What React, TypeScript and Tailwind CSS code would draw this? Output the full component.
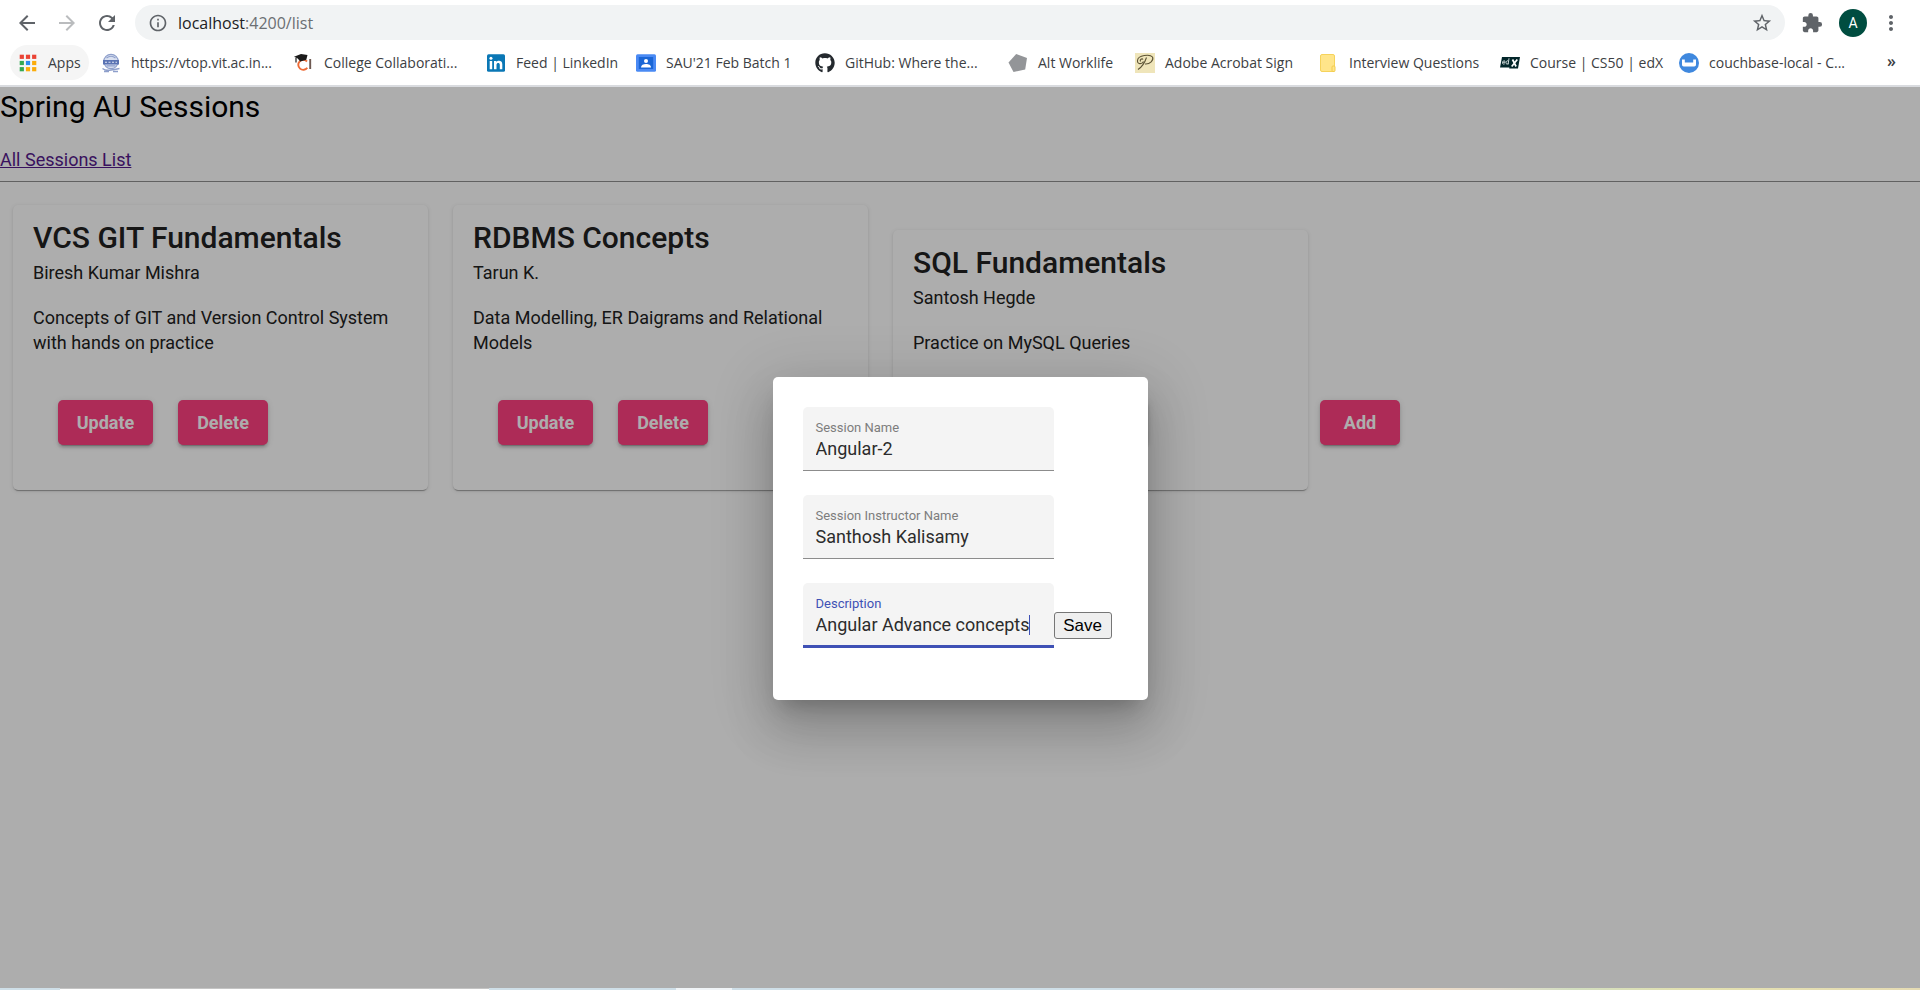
import React from "react";
import {
  MdArrowBack,
  MdArrowForward,
  MdExtension,
  MdMoreVert,
  MdOutlineInfo,
  MdRefresh,
  MdStarBorder,
} from "react-icons/md";
import { FaGithub } from "react-icons/fa";

const AppsIcon = () => (
  <svg viewBox="0 0 20 20" className="size-5">
    {["#ea4335", "#ea4335", "#ea4335", "#34a853", "#2b8cf0", "#fbac0a", "#34a853", "#fbac0a", "#fbac0a"].map((c, i) => (
      <rect key={i} x={1.7 + (i % 3) * 6.2} y={1.7 + Math.floor(i / 3) * 6.2} width="4.2" height="4.2" fill={c} />
    ))}
  </svg>
);

const VitIcon = () => (
  <svg viewBox="0 0 20 20" className="size-5" fill="none" stroke="#8e9fcb">
    <circle cx="10" cy="8.500" r="7.2" strokeWidth="1.2" fill="#d9e0f0" />
    <path d="M5.500 5q4.500-3.500 9 0M5.500 12.800h9" strokeWidth="1.2" />
    <path d="M2 7h16v4.500H2z" fill="#5a73b3" stroke="none" />
    <path d="M4 9.300h2m1.500 0h2m1.500 0h2m1.500 0h1.500" stroke="#dfe6f5" strokeWidth="1.1" />
    <path d="M1.500 15.500q3 2.500 8.500 1.500t8.500-1.500M3 18.500h5m4 0h5" strokeWidth="1.400" />
  </svg>
);

const CollegeIcon = () => (
  <svg viewBox="0 0 20 20" className="size-5">
    <path d="M13 8.500a5 5 0 1 0 .3 6.300" fill="none" stroke="#ee6a35" strokeWidth="1.900" />
    <path d="M0 3.800 7 1l6.500 1-1.200 4.800-6 1.700-2.600-3z" fill="#1b1b1b" />
    <path d="M2 5v4.500" stroke="#1b1b1b" strokeWidth="1.200" />
    <path d="M16.200 6v10" stroke="#6e5a52" strokeWidth="1.900" />
  </svg>
);

const LinkedInIcon = () => (
  <svg viewBox="0 0 20 20" className="size-5">
    <rect x="1" y="1.200" width="18" height="17.600" rx="1.500" fill="#0a77b5" />
    <path d="M3.700 8h2.500v8.200H3.700zM8 8h2.400v1.200c.9-1.900 5.900-2.300 5.900 2v5h-2.500v-4.500c0-2.400-3.300-2.200-3.300 0v4.500H8z" fill="#fff" />
    <circle cx="4.950" cy="5.200" r="1.500" fill="#fff" />
  </svg>
);

const ClassroomIcon = () => (
  <svg viewBox="0 0 20 20" className="size-5">
    <rect y="1.300" width="20" height="17.400" rx="1.500" fill="#4a8af4" />
    <rect x="2.800" y="4" width="14.400" height="12" fill="#1a66d6" />
    <circle cx="10" cy="7.900" r="2" fill="#fff" />
    <path d="M5 14.500c0-2.500 2.300-3.500 5-3.500s5 1 5 3.500z" fill="#fff" />
  </svg>
);

const PentagonIcon = () => (
  <svg viewBox="0 0 20 20" className="size-5">
    <path d="M8.200 1 19 5l-1.800 11.500L5.500 19 .5 9.500z" fill="#939598" />
  </svg>
);

const AdobeSignIcon = () => (
  <svg viewBox="0 0 20 20" className="size-5">
    <rect width="20" height="20" fill="#efe5ba" />
    <path d="M3 16.500C7 14 10 9 11.500 4.500M8.500 8.500c-1.500 3-6.500 3-6-1C3 2 15 1 17.500 4c1.500 3-2.500 7.500-7.500 7M8 6.500C7 5 4.500 6.500 5.500 8.500" fill="none" stroke="#5d5436" strokeWidth="1.100" />
  </svg>
);

const NoteIcon = () => (
  <svg viewBox="0 0 20 20" className="size-5">
    <rect x="1.500" y="1.500" width="14" height="17" rx="1.500" fill="#ffe58a" stroke="#f6d35b" />
    <rect x="13" y="13" width="3" height="5.500" rx="1" fill="#ffe58a" stroke="#f3cc4c" />
  </svg>
);

const EdxIcon = () => (
  <svg viewBox="0 0 20 20" className="size-5">
    <path d="M2 4h9.500l-1 10.500H0z" fill="#03262a" />
    <path d="M11 4h9l-2 11.500H9.200z" fill="#03262a" />
    <path d="M2.500 9.300h2.600c.2-2.300-2.400-1.800-2.600.2-.2 2 1.700 1.800 2.300 1.200M9 5.300l-.9 6.200M8.500 8.500c-.7-1.500-2.500-.5-2.500 1.200s1.700 2 2.200.6" fill="none" stroke="#dfe6e6" strokeWidth=".9" />
    <path d="m12.500 6.500 3.600 7M17.300 6.500l-5.600 7" stroke="#fff" strokeWidth="1.700" />
  </svg>
);

const CouchbaseIcon = () => (
  <svg viewBox="0 0 20 20" className="size-5">
    <circle cx="10" cy="10" r="10" fill="#3f88de" />
    <path d="M3 6.500h2.800v3h8.400v-3H17v5c0 1.300-.6 2-1.800 2H4.800c-1.200 0-1.800-.7-1.800-2z" fill="#fff" />
  </svg>
);

const bookmarks = [
  { label: "https://vtop.vit.ac.in...", icon: <VitIcon />, width: "w-[193px]" },
  { label: "College Collaborati...", icon: <CollegeIcon />, width: "w-[192px]" },
  { label: "Feed | LinkedIn", icon: <LinkedInIcon />, width: "w-[150px]" },
  { label: "SAU'21 Feb Batch 1", icon: <ClassroomIcon />, width: "w-[179px]" },
  { label: "GitHub: Where the...", icon: <FaGithub className="size-5 text-[#24292e]" />, width: "w-[193px]" },
  { label: "Alt Worklife", icon: <PentagonIcon />, width: "w-[127px]" },
  { label: "Adobe Acrobat Sign", icon: <AdobeSignIcon />, width: "w-[184px]" },
  { label: "Interview Questions", icon: <NoteIcon />, width: "w-[181px]" },
  { label: "Course | CS50 | edX", icon: <EdxIcon />, width: "w-[179px]" },
  { label: "couchbase-local - C...", icon: <CouchbaseIcon />, width: "w-[180px]" },
];

function BrowserBar() {
  return (
    <header className="border-b-2 border-[#d9dbdf] bg-white font-['Open_Sans','Noto_Sans',sans-serif] text-[#3c4043]">
      <div className="flex items-center pt-[5px] pr-[17px] pl-[15px]">
        <button aria-label="Back" className="mr-4 text-[#5f6368]"><MdArrowBack size={24} /></button>
        <button aria-label="Forward" className="mr-4 text-[#babcbe]"><MdArrowForward size={24} /></button>
        <button aria-label="Reload" className="mr-4 text-[#5f6368]"><MdRefresh size={24} /></button>
        <div className="flex h-[35px] flex-1 items-center rounded-full bg-[#f1f3f4] pr-3 pl-[13px]">
          <MdOutlineInfo size={20} className="text-[#5f6368]" />
          <span className="ml-2.5 flex-1 text-base text-[#6b6f73]">
            <span className="text-[#202124]">localhost</span>:4200/list
          </span>
          <button aria-label="Bookmark this page" className="text-[#5f6368]"><MdStarBorder size={22} /></button>
        </div>
        <button aria-label="Extensions" className="ml-4 text-[#5f6368]"><MdExtension size={22} /></button>
        <button aria-label="Profile" className="ml-4 flex size-7 items-center justify-center rounded-full bg-[#004d40] font-['Roboto',sans-serif] text-sm text-white">A</button>
        <button aria-label="Menu" className="ml-3 text-[#5f6368]"><MdMoreVert size={24} /></button>
      </div>
      <nav className="flex items-center pt-[5px] pb-[5px] pl-2.5 text-sm">
        <a href="#apps" className="mr-3 flex h-[35px] w-[79px] shrink-0 items-center gap-2.5 rounded-full bg-[#f5f5f5] pl-2">
          <AppsIcon />Apps
        </a>
        {bookmarks.map((b) => (
          <a key={b.label} href="#bookmark" className={`flex shrink-0 items-center gap-2.5 whitespace-nowrap ${b.width}`}>
            <span className="shrink-0">{b.icon}</span>{b.label}
          </a>
        ))}
        <button aria-label="More bookmarks" className="mr-6 ml-auto pb-1 text-base leading-5 font-semibold">»</button>
      </nav>
    </header>
  );
}

function PinkButton({ children, width }: { children: React.ReactNode; width: string }) {
  return (
    <button className={`h-[45px] rounded-[5px] bg-[#ff4081] text-lg leading-6 font-bold text-white shadow-[0_4px_1px_-3px_rgba(0,0,0,0.2),0_3px_3px_0_rgba(0,0,0,0.14),0_1px_6px_0_rgba(0,0,0,0.12)] ${width}`}>
      {children}
    </button>
  );
}

const sessions = [
  { title: "VCS GIT Fundamentals", by: "Biresh Kumar Mishra", text: "Concepts of GIT and Version Control System with hands on practice" },
  { title: "RDBMS Concepts", by: "Tarun K.", text: "Data Modelling, ER Daigrams and Relational Models" },
  { title: "SQL Fundamentals", by: "Santosh Hegde", text: "Practice on MySQL Queries" },
];

function Field({ id, label, value, focused }: { id: string; label: string; value: string; focused?: boolean }) {
  return (
    <div className={`flex w-[251px] flex-col rounded-t-[5px] bg-[#f4f4f4] px-[13px] pt-3 ${focused ? "h-[65px] border-b-3 border-[#3f51b5]" : "h-16 border-b border-[#8c8c8c]"}`}>
      <label htmlFor={id} className={`text-[13px] leading-[18px] ${focused ? "text-[#3f51b5]" : "text-[#7d7d7d]"}`}>{label}</label>
      <div className="mt-0.5 flex h-5 items-center">
        <input
          id={id}
          defaultValue={value}
          className={`h-5 bg-transparent text-lg leading-5 text-[#2c2c2c] caret-transparent outline-none ${focused ? "field-sizing-content" : "w-full"}`}
        />
        {focused && <span className="h-5 w-px shrink-0 bg-[#3f51b5]" />}
      </div>
    </div>
  );
}

export default function App() {
  return (
    <div className="flex min-h-screen flex-col bg-white font-['Roboto',sans-serif]">
      <BrowserBar />
      <main className="relative flex-1 text-lg leading-[25px]">
        <h1 className="mb-5 text-3xl leading-10 text-black">Spring AU Sessions</h1>
        <a href="#list" className="block w-fit text-[#551a8b] underline">All Sessions List</a>
        <hr className="mt-[9px] mb-[23px] border-t border-[#8f8f8f]" />
        <div className="flex items-end pl-[13px] text-[#212121]">
          {sessions.map((s, i) => (
            <article key={s.title} className={`w-[415px] rounded-[5px] bg-white px-5 pt-5 pb-[45px] shadow-[0_3px_1px_-2px_rgba(0,0,0,0.2),0_1px_1px_0_rgba(0,0,0,0.14),0_1px_4px_0_rgba(0,0,0,0.12)] ${i < 2 ? "mr-[25px]" : "mr-3"}`}>
              <h2 className="text-3xl leading-[25px] font-medium">{s.title}</h2>
              <p className="mt-2.5">{s.by}</p>
              <p className="mt-5">{s.text}</p>
              <div className="mt-[45px] flex gap-[25px] pl-[25px]">
                <PinkButton width="w-[95px]">Update</PinkButton>
                <PinkButton width="w-[90px]">Delete</PinkButton>
              </div>
            </article>
          ))}
          <div className="mb-[45px] flex">
            <PinkButton width="w-20">Add</PinkButton>
          </div>
        </div>
        <div className="absolute inset-0 flex items-center justify-center bg-black/32 pt-0.5">
          <form
            role="dialog"
            aria-label="Session"
            onSubmit={(e) => e.preventDefault()}
            className="flex w-[375px] flex-col gap-6 rounded-[5px] bg-white px-[30px] pt-[30px] pb-[52px] shadow-[0_14px_19px_-9px_rgba(0,0,0,0.2),0_30px_48px_4px_rgba(0,0,0,0.14),0_11px_58px_10px_rgba(0,0,0,0.12)]"
          >
            <Field id="name" label="Session Name" value="Angular-2" />
            <Field id="instructor" label="Session Instructor Name" value="Santhosh Kalisamy" />
            <div className="flex items-end">
              <Field id="description" label="Description" value="Angular Advance concepts" focused />
              <button className="mb-[9px] h-[27px] w-[58px] shrink-0 rounded-[3px] border border-[#767676] bg-[#efefef] font-['Liberation_Sans',sans-serif] text-[17px] leading-5 text-black">Save</button>
            </div>
          </form>
        </div>
      </main>
      <footer className="flex h-0.5 bg-[linear-gradient(90deg,#cfdfe8_0%,#cfdfe8_62%,#e2dcdf_68%,#ecdcc8_75%,#e3dccf_78%,#d3dfc0_82%,#e3e1b0_88%,#e6dcb4_100%)]">
        <div className="ml-[60px] w-[429px] border-t border-[#c4c4c4] bg-white" />
        <div className="ml-[187px] w-14 bg-[#f1f5f8]" />
      </footer>
    </div>
  );
}
